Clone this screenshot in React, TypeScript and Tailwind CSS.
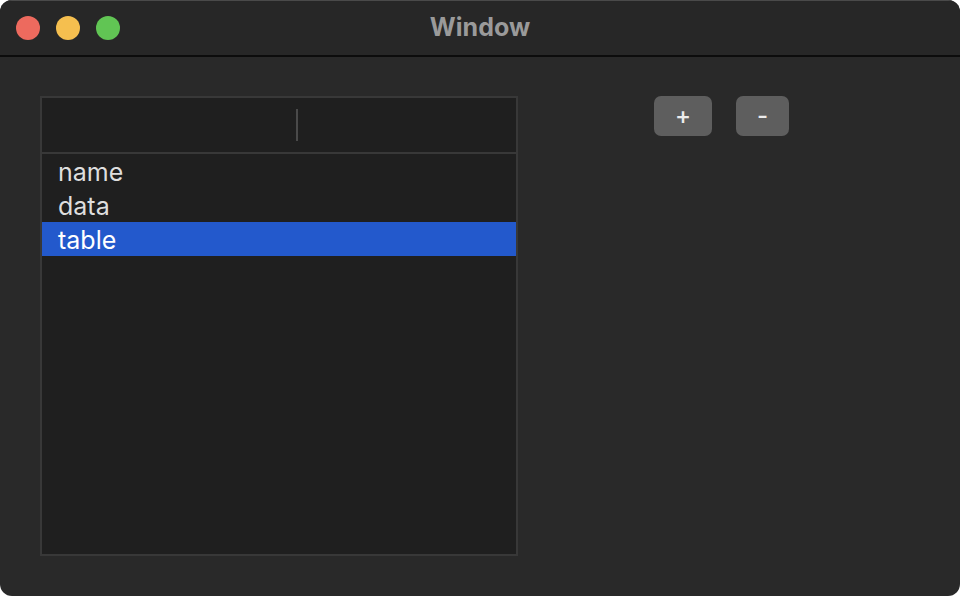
const rows = ["name", "data", "table"];
const selected = 2;

export default function App() {
  return (
    <div className="w-[960px] h-[596px] bg-white" style={{ fontFamily: "Inter, 'Liberation Sans', sans-serif" }}>
      <div className="w-full h-full rounded-[12px] overflow-hidden bg-[#292929] flex flex-col">
        {/* Title bar */}
        <div className="relative h-[57px] shrink-0 bg-[#272727] border-t border-[#4a4a4a] border-b-2 border-b-[#0c0c0c] flex items-center">
          <div className="flex items-center gap-4 pl-4">
            <span className="w-6 h-6 rounded-full bg-[#ed6a5e]" />
            <span className="w-6 h-6 rounded-full bg-[#f5bf4f]" />
            <span className="w-6 h-6 rounded-full bg-[#61c554]" />
          </div>
          <div className="absolute inset-0 flex items-center justify-center text-[25px] font-bold text-[#9a9a9a]">
            Window
          </div>
        </div>

        {/* Content */}
        <div className="flex items-start pt-[39px] pl-[40px]">
          <div className="w-[478px] h-[460px] border-2 border-[#383838] bg-[#1f1f1f] flex flex-col">
            <div className="h-[56px] shrink-0 border-b-2 border-[#383838] flex items-center">
              <div className="w-[254px]" />
              <div className="w-[2px] h-[32px] bg-[#4a4a4a]" />
            </div>
            <div className="flex flex-col">
              {rows.map((r, i) => (
                <div
                  key={r}
                  className={
                    i === selected
                      ? "h-[34px] flex items-center pl-[16px] pt-[3px] text-[25px] bg-[#2359cc] text-white"
                      : "h-[34px] flex items-center pl-[16px] pt-[3px] text-[25px] text-[#dedede]"
                  }
                >
                  {r}
                </div>
              ))}
            </div>
          </div>

          <div className="flex gap-[24px] ml-[136px]">
            <button className="w-[58px] h-[40px] rounded-[7px] bg-[#5e5e5e] text-[#ececec] text-[24px] font-medium flex items-center justify-center">
              +
            </button>
            <button className="w-[53px] h-[40px] rounded-[7px] bg-[#5e5e5e] text-[#ececec] text-[24px] font-medium flex items-center justify-center">
              -
            </button>
          </div>
        </div>
      </div>
    </div>
  );
}
